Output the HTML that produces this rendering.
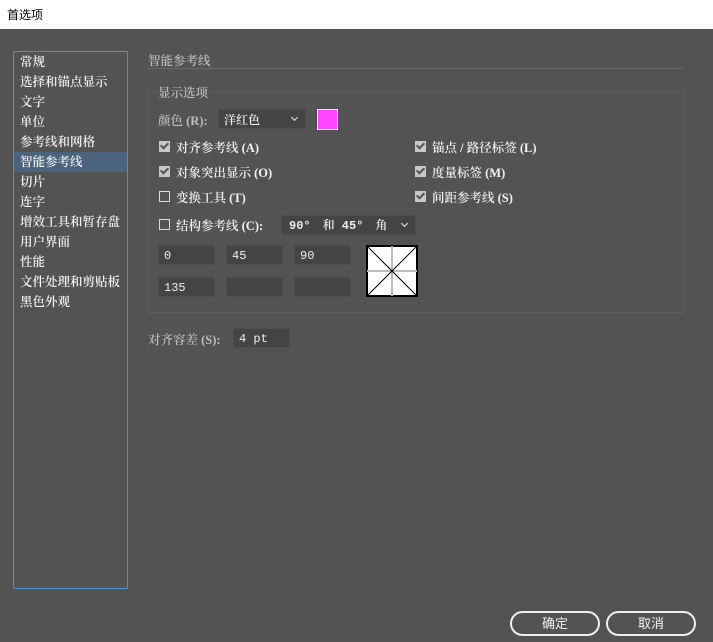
<!DOCTYPE html><html><head><meta charset="utf-8"><style>
body{margin:0;width:713px;height:642px;background:#535353;position:relative;overflow:hidden;font-family:"Liberation Serif","Noto Serif CJK SC",serif;font-size:12.5px;color:#f2f2f2}
.a{position:absolute;white-space:nowrap}
.title{position:absolute;left:0;top:0;width:713px;height:29px;background:#fff;color:#000;font-family:"Liberation Sans","Noto Sans CJK SC",sans-serif;font-size:12px}
.side{position:absolute;left:13px;top:51px;width:113px;height:536px;border:1px solid #4b8fd9;border-radius:2px}
.side div{height:20px;line-height:20px;padding-left:6px;font-weight:600}
.sel{background:#4a6480}
.in{position:absolute;background:#444;border:1px solid #4d4d4d;border-radius:2px;height:20px;line-height:20px;padding-left:5px;box-sizing:border-box;color:#eee;font-family:"Liberation Mono","Noto Serif CJK SC",monospace;font-size:12px}
.cb{position:absolute;width:11px;height:11px;box-sizing:border-box}
.on{background:#c8c8c8}
.on:after{content:"";position:absolute;left:3px;top:0px;width:3px;height:6px;border:solid #555;border-width:0 2px 2px 0;transform:rotate(45deg)}
.off{border:1px solid #ddd}
.btn{position:absolute;width:90px;height:25px;border:2px solid #eee;border-radius:13px;box-sizing:border-box;text-align:center;line-height:21px;font-family:"Liberation Sans","Noto Sans CJK SC",sans-serif;font-size:13px}
.dd:after{content:"";position:absolute;right:8px;top:5px;width:4px;height:4px;border:solid #eee;border-width:0 1.5px 1.5px 0;transform:rotate(45deg)}
.g{color:#bdbdbd}
.b{font-weight:600}
</style></head><body>
<div class="title"><span class="a" style="left:7px;top:6px">首选项</span></div>
<div class="side">
<div>常规</div><div>选择和锚点显示</div><div>文字</div><div>单位</div><div>参考线和网格</div><div class="sel">智能参考线</div><div>切片</div><div>连字</div><div>增效工具和暂存盘</div><div>用户界面</div><div>性能</div><div>文件处理和剪贴板</div><div>黑色外观</div>
</div>
<span class="a g b" style="left:148px;top:51px">智能参考线</span>
<div class="a" style="left:148px;top:68px;width:535px;height:1px;background:#6a6a6a"></div>
<div class="a" style="left:148px;top:91px;width:534px;height:220px;border:1px solid #5f5f5f"></div>
<span class="a g b" style="left:158px;top:83px;background:#535353;padding-right:2px">显示选项</span>
<span class="a g b" style="left:158px;top:111px">颜色 (R):</span>
<div class="in dd" style="left:218px;top:109px;width:88px;font-family:'Liberation Serif','Noto Serif CJK SC',serif;font-weight:600">洋红色</div>
<div class="a" style="left:317px;top:109px;width:21px;height:21px;background:#ff45ff;border:1px solid #fff;box-sizing:border-box"></div>
<div class="cb on" style="left:159px;top:141px"></div><span class="a b" style="left:176px;top:138px">对齐参考线 (A)</span>
<div class="cb on" style="left:159px;top:166px"></div><span class="a b" style="left:176px;top:163px">对象突出显示 (O)</span>
<div class="cb off" style="left:159px;top:191px"></div><span class="a b" style="left:176px;top:188px">变换工具 (T)</span>
<div class="cb off" style="left:159px;top:219px"></div><span class="a b" style="left:176px;top:216px">结构参考线 (C):</span>
<div class="cb on" style="left:415px;top:141px"></div><span class="a b" style="left:432px;top:138px">锚点 / 路径标签 (L)</span>
<div class="cb on" style="left:415px;top:166px"></div><span class="a b" style="left:432px;top:163px">度量标签 (M)</span>
<div class="cb on" style="left:415px;top:191px"></div><span class="a b" style="left:432px;top:188px">间距参考线 (S)</span>
<div class="in dd" style="left:281px;top:215px;width:135px;padding-left:7px;font-weight:600">90°　和 45°　角</div>
<div class="in" style="left:158px;top:245px;width:57px">0</div>
<div class="in" style="left:226px;top:245px;width:57px">45</div>
<div class="in" style="left:294px;top:245px;width:57px">90</div>
<div class="in" style="left:158px;top:277px;width:57px">135</div>
<div class="in" style="left:226px;top:277px;width:57px"></div>
<div class="in" style="left:294px;top:277px;width:57px"></div>
<svg class="a" style="left:366px;top:245px" width="52" height="52" viewBox="0 0 52 52"><rect x="1" y="1" width="50" height="50" fill="#fff" stroke="#000" stroke-width="2"/><line x1="26" y1="1" x2="26" y2="51" stroke="#bbb" stroke-width="2"/><line x1="1" y1="26" x2="51" y2="26" stroke="#bbb" stroke-width="2"/><line x1="1" y1="1" x2="51" y2="51" stroke="#000"/><line x1="51" y1="1" x2="1" y2="51" stroke="#000"/></svg>
<span class="a g b" style="left:148px;top:330px">对齐容差 (S):</span>
<div class="in" style="left:233px;top:328px;width:57px">4 pt</div>
<div class="btn" style="left:510px;top:611px">确定</div>
<div class="btn" style="left:606px;top:611px">取消</div>
</body></html>
